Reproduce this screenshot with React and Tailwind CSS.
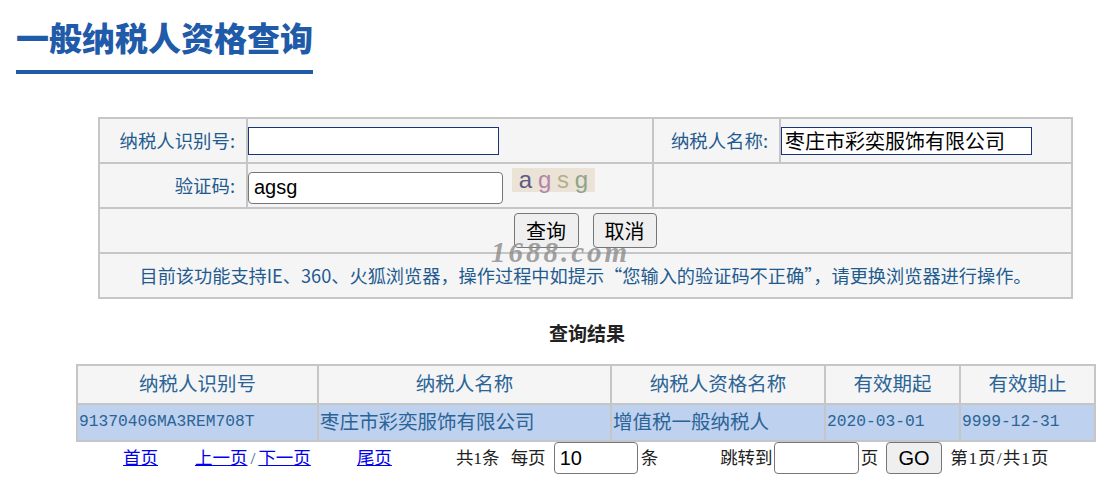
const CJK_SANS = 'font-["Noto_Sans_CJK_SC","Noto_Sans",sans-serif]';

const labelCell = 'border-2 border-[#c6c6c6] bg-[#f5f5f5] text-right pr-[11px] text-[18.4px] text-[#1f5b8f] font-["Noto_Sans_CJK_SC",sans-serif] p-0';
const cell = 'border-2 border-[#c6c6c6] bg-[#f5f5f5] p-0';
const headCell = 'border-2 border-[#c6c6c6] bg-[#f5f5f5] text-center font-normal p-0';
const bodyCell = 'border-2 border-[#c6c6c6] bg-[#bed1ef] text-left pl-px p-0';
const monoText = "font-['Liberation_Mono',monospace] text-[16.25px]";

const Captcha = () => (
    <div className="mt-[-16px] ml-[9px] flex h-[24px] w-[83px] items-center justify-around bg-[#ebe3d6] px-[4px] font-['Liberation_Sans',sans-serif] text-[24px] leading-none">
        <span className="text-[#5b5a86]">a</span>
        <span className="text-[#b285ab]">g</span>
        <span className="text-[#b9ad8f]">s</span>
        <span className="text-[#8ea38c]">g</span>
    </div>
);

const SearchForm = () => (
    <table className="ml-[98px] w-[973px] table-fixed border-collapse">
        <colgroup>
            <col className="w-[148px]" />
            <col className="w-[406px]" />
            <col className="w-[127px]" />
            <col className="w-[292px]" />
        </colgroup>
        <tbody>
            <tr className="h-[45px]">
                <td className={labelCell}>纳税人识别号:</td>
                <td className={cell}>
                    <input className="block h-[28px] w-[251px] border border-[#1b3478] bg-white outline-none" />
                </td>
                <td className={labelCell}>纳税人名称:</td>
                <td className={cell}>
                    <input
                        defaultValue="枣庄市彩奕服饰有限公司"
                        className={`block h-[28px] w-[251px] border border-[#1b3478] bg-white pl-[3px] text-[20px] text-black outline-none ${CJK_SANS}`}
                    />
                </td>
            </tr>
            <tr className="h-[45px]">
                <td className={labelCell}>验证码:</td>
                <td className={cell}>
                    <div className="mt-[4px] flex items-center">
                        <input
                            defaultValue="agsg"
                            className="block h-[32px] w-[255px] rounded-[4px] border border-[#767676] bg-white px-[5px] font-['Liberation_Sans',sans-serif] text-[20px] text-black outline-none"
                        />
                        <Captcha />
                    </div>
                </td>
                <td colSpan={2} className={cell}></td>
            </tr>
            <tr className="h-[45px]">
                <td colSpan={4} className={cell}>
                    <div className={`flex justify-center gap-[14px] pr-[1px] text-[20px] text-black ${CJK_SANS}`}>
                        <button className="h-[35px] w-[65px] rounded-[4px] border border-[#767676] bg-[#efefef]">查询</button>
                        <button className="h-[35px] w-[64px] rounded-[4px] border border-[#767676] bg-[#efefef]">取消</button>
                    </div>
                </td>
            </tr>
            <tr className="h-[45px]">
                <td colSpan={4} className={`${cell} text-center text-[18.2px] text-[#1f5b8f] ${CJK_SANS}`}>
                    {'目前该功能支持IE、360、火狐浏览器\uFF0C操作过程中如提示“您输入的验证码不正确”\uFF0C请更换浏览器进行操作。'}
                </td>
            </tr>
        </tbody>
    </table>
);

const ResultTable = () => (
    <table className="ml-[76px] w-[1018px] table-fixed border-collapse font-['Liberation_Serif','Noto_Sans_CJK_SC',serif] text-[19.5px] text-[#2a6496]">
        <colgroup>
            <col className="w-[241px]" />
            <col className="w-[293px]" />
            <col className="w-[214px]" />
            <col className="w-[135px]" />
            <col className="w-[135px]" />
        </colgroup>
        <thead>
            <tr className="h-[39px]">
                {['纳税人识别号', '纳税人名称', '纳税人资格名称', '有效期起', '有效期止'].map((title) => (
                    <th key={title} className={headCell}>{title}</th>
                ))}
            </tr>
        </thead>
        <tbody>
            <tr className="h-[37px]">
                <td className={`${bodyCell} ${monoText}`}>91370406MA3REM708T</td>
                <td className={bodyCell}>枣庄市彩奕服饰有限公司</td>
                <td className={bodyCell}>增值税一般纳税人</td>
                <td className={`${bodyCell} ${monoText}`}>2020-03-01</td>
                <td className={`${bodyCell} ${monoText}`}>9999-12-31</td>
            </tr>
        </tbody>
    </table>
);

const Pager = () => (
    <div className="flex h-[32px] items-center font-['Liberation_Serif','Noto_Sans_CJK_SC',serif] text-[17.5px] text-[#222] whitespace-nowrap">
        <a href="#" className="ml-[123px] text-[#0000ee] underline">首页</a>
        <span className="ml-[37px] text-[#2a6496]">
            <a href="#" className="text-[#0000ee] underline">上一页</a>
            <span className="px-[3px]">/</span>
            <a href="#" className="text-[#0000ee] underline">下一页</a>
        </span>
        <a href="#" className="ml-[46px] text-[#0000ee] underline">尾页</a>
        <span className="ml-[64px]">共1条</span>
        <span className="ml-[11px]">每页</span>
        <input
            defaultValue="10"
            className="ml-[8px] h-[32px] w-[84px] rounded-[4px] border border-[#767676] px-[5px] font-['Liberation_Sans',sans-serif] text-[20px] text-black outline-none"
        />
        <span className="ml-[3px]">条</span>
        <span className="ml-[62px]">跳转到</span>
        <input className="ml-[1px] h-[32px] w-[85px] rounded-[4px] border border-[#767676] outline-none" />
        <span className="ml-[2px]">页</span>
        <button className="ml-[8px] h-[32px] w-[56px] rounded-[4px] border border-[#767676] bg-[#efefef] font-['Liberation_Sans',sans-serif] text-[20px] text-black">GO</button>
        <span className="ml-[8px] tracking-[1px]">第1页/共1页</span>
    </div>
);

export default function App() {
    return (
        <div className="relative h-[501px] w-[1117px] overflow-hidden bg-white">
            <div className="px-[16px] pt-[13px]">
                <h1 className={`w-[297px] border-b-4 border-[#1f5ba8] pb-[9px] text-[33px] leading-[48px] font-black whitespace-nowrap text-[#1f5ba8] ${CJK_SANS}`}>
                    一般纳税人资格查询
                </h1>
            </div>
            <div className="mt-[43px]">
                <SearchForm />
            </div>
            <h2 className="mt-[22px] ml-[57px] h-[43px] text-center font-['Liberation_Serif','Noto_Sans_CJK_SC',serif] text-[19px] leading-[28px] font-bold text-[#222]">
                查询结果
            </h2>
            <ResultTable />
            <Pager />
            <span className="absolute top-[236px] left-[491px] font-['Liberation_Serif',serif] text-[29px] leading-[32px] font-bold tracking-[3px] text-[#8a8a8a]/80 italic">
                1688.com
            </span>
        </div>
    );
}
